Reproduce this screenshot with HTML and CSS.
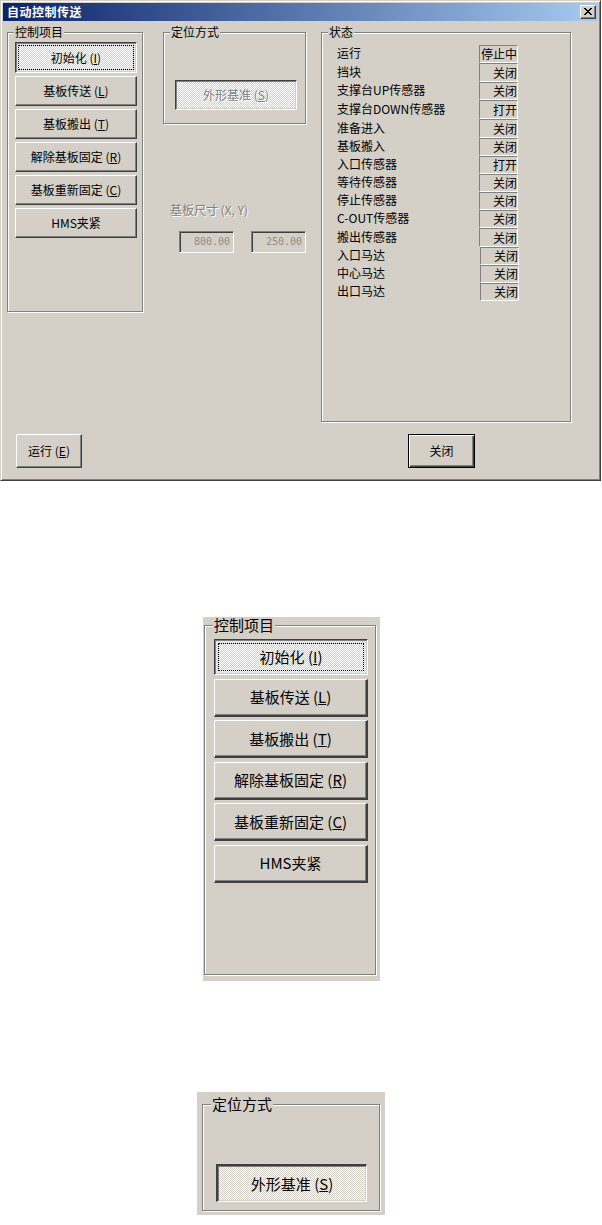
FILE: index.html
```html
<!DOCTYPE html>
<html lang="zh-CN">
<head>
<meta charset="utf-8">
<title>自动控制传送</title>
<link rel="stylesheet" href="styles.css">
</head>
<body>
<div class="window">
  <div class="titlebar">
    <span class="title">自动控制传送</span>
    <div class="close-x">
      <svg width="8" height="7" viewBox="0 0 8 7" shape-rendering="crispEdges"><path fill="#000" d="M0 0h2v1H0zM6 0h2v1H6zM1 1h2v1H1zM5 1h2v1H5zM2 2h4v1H2zM3 3h2v1H3zM2 4h4v1H2zM1 5h2v1H1zM5 5h2v1H5zM0 6h2v1H0zM6 6h2v1H6z"/></svg>
    </div>
  </div>
  <div class="client">
    <div class="top">
      <div class="group g-ctrl">
        <span class="legend">控制项目</span>
        <div class="btn pushed focus ctrl-btn first">初始化 (<u>I</u>)</div>
        <div class="btn ctrl-btn">基板传送 (<u>L</u>)</div>
        <div class="btn ctrl-btn">基板搬出 (<u>T</u>)</div>
        <div class="btn ctrl-btn">解除基板固定 (<u>R</u>)</div>
        <div class="btn ctrl-btn">基板重新固定 (<u>C</u>)</div>
        <div class="btn ctrl-btn">HMS夹紧</div>
      </div>
      <div class="mid">
        <div class="group g-pos">
          <span class="legend">定位方式</span>
          <div class="btn pushed disabled pos-btn">外形基准 (<u>S</u>)</div>
        </div>
        <div class="size-label">基板尺寸 (X, Y)</div>
        <div class="edits">
          <div class="edit">800.00</div>
          <div class="edit">250.00</div>
        </div>
      </div>
      <div class="group g-status">
        <span class="legend">状态</span>
        <div class="status">
          <div class="row"><span class="lbl">运行</span><span class="val">停止中</span></div>
          <div class="row tall"><span class="lbl">挡块</span><span class="val">关闭</span></div>
          <div class="row"><span class="lbl">支撑台UP传感器</span><span class="val">关闭</span></div>
          <div class="row tall"><span class="lbl">支撑台DOWN传感器</span><span class="val">打开</span></div>
          <div class="row tall"><span class="lbl">准备进入</span><span class="val">关闭</span></div>
          <div class="row"><span class="lbl">基板搬入</span><span class="val">关闭</span></div>
          <div class="row"><span class="lbl">入口传感器</span><span class="val">打开</span></div>
          <div class="row"><span class="lbl">等待传感器</span><span class="val">关闭</span></div>
          <div class="row"><span class="lbl">停止传感器</span><span class="val">关闭</span></div>
          <div class="row"><span class="lbl">C-OUT传感器</span><span class="val">关闭</span></div>
          <div class="row tall"><span class="lbl">搬出传感器</span><span class="val">关闭</span></div>
          <div class="row"><span class="lbl">入口马达</span><span class="val shift">关闭</span></div>
          <div class="row"><span class="lbl">中心马达</span><span class="val shift">关闭</span></div>
          <div class="row"><span class="lbl">出口马达</span><span class="val shift">关闭</span></div>
        </div>
      </div>
    </div>
    <div class="bottom">
      <div class="btn run-btn">运行 (<u>E</u>)</div>
      <div class="btn default close-btn">关闭</div>
    </div>
  </div>
</div>

<div class="zoom-a">
  <div class="group za-group">
    <span class="legend big">控制项目</span>
    <div class="btn pushed focus za-btn first">初始化 (<u>I</u>)</div>
    <div class="btn za-btn">基板传送 (<u>L</u>)</div>
    <div class="btn za-btn">基板搬出 (<u>T</u>)</div>
    <div class="btn za-btn">解除基板固定 (<u>R</u>)</div>
    <div class="btn za-btn">基板重新固定 (<u>C</u>)</div>
    <div class="btn za-btn">HMS夹紧</div>
  </div>
</div>

<div class="zoom-b">
  <div class="group zb-group">
    <span class="legend big">定位方式</span>
    <div class="btn pushed zb-btn">外形基准 (<u>S</u>)</div>
  </div>
</div>
</body>
</html>
```
FILE: styles.css
```css
body {
  margin: 0;
  background: #fff;
  font: 12px/14px "Noto Sans CJK SC", "Noto Sans", sans-serif;
  color: #000;
}

u { text-decoration: underline; text-underline-offset: 1px; }

.window {
  width: 601px;
  height: 481px;
  box-sizing: border-box;
  background: #d4d0c8;
  border: 1px solid;
  border-color: #d4d0c8 #404040 #404040 #d4d0c8;
  box-shadow: inset 1px 1px #fff, inset -1px -1px #808080;
  padding: 2px;
  display: flex;
  flex-direction: column;
}

.titlebar {
  height: 18px;
  flex: none;
  background: linear-gradient(to right, #0a246a, #a6caf0);
  display: flex;
  align-items: center;
  padding: 0 2px 0 4px;
}

.title {
  flex: 1;
  color: #fff;
  font-weight: bold;
  font-size: 12px;
  letter-spacing: 0.5px;
}

.close-x {
  width: 16px;
  height: 14px;
  box-sizing: border-box;
  background: #d4d0c8;
  border: 1px solid;
  border-color: #fff #404040 #404040 #fff;
  box-shadow: inset -1px -1px #808080;
  display: flex;
  align-items: center;
  justify-content: center;
  padding: 0 1px 1px 0;
}

.client {
  flex: 1;
  padding-left: 4px;
  display: flex;
  flex-direction: column;
}

.top {
  display: flex;
  align-items: flex-start;
  margin-top: 11px;
}

.group {
  position: relative;
  box-sizing: border-box;
  border: 1px solid #808080;
  box-shadow: inset 1px 1px #fff, 1px 1px #fff;
}

.legend {
  position: absolute;
  top: -8px;
  left: 6px;
  padding: 0 1px;
  background: #d4d0c8;
  line-height: 14px;
  white-space: nowrap;
}

.btn {
  box-sizing: border-box;
  display: flex;
  align-items: center;
  justify-content: center;
  background: #d4d0c8;
  border: 1px solid;
  border-color: #fff #404040 #404040 #fff;
  box-shadow: inset -1px -1px #808080;
  white-space: nowrap;
  flex: none;
}

.btn.pushed {
  border-color: #404040 #fff #fff #404040;
  box-shadow: inset 1px 1px #808080, inset -1px -1px #d4d0c8;
  background: repeating-conic-gradient(#fff 0 25%, #d4d0c8 0 50%) 0 0 / 2px 2px;
}

.btn.focus {
  outline: 1px dotted #000;
  outline-offset: -4px;
}

.btn.disabled {
  color: #808080;
  text-shadow: 1px 1px 0 #fff;
}

.btn.default {
  border: 1px solid #000;
  box-shadow: inset 1px 1px #fff, inset -1px -1px #404040, inset -2px -2px #808080;
}

.g-ctrl {
  width: 136px;
  height: 280px;
  padding: 9px 0 0 7px;
  display: flex;
  flex-direction: column;
  gap: 3px;
}

.ctrl-btn {
  width: 122px;
  height: 30px;
}

.ctrl-btn.first { height: 31px; }

.mid {
  margin-left: 20px;
  display: flex;
  flex-direction: column;
}

.g-pos {
  width: 143px;
  height: 92px;
  padding: 47px 0 0 11px;
}

.pos-btn {
  width: 122px;
  height: 30px;
}

.size-label {
  margin: 79px 0 0 7px;
  color: #808080;
  text-shadow: 1px 1px 0 #fff;
  white-space: nowrap;
}

.edits {
  display: flex;
  gap: 17px;
  margin: 14px 0 0 16px;
}

.edit {
  width: 55px;
  height: 22px;
  box-sizing: border-box;
  border: 1px solid;
  border-color: #808080 #fff #fff #808080;
  box-shadow: inset 1px 1px #404040, inset -1px -1px #d4d0c8;
  font: 10px/20px "DejaVu Sans Mono", "Liberation Mono", monospace;
  color: #8c8c8c;
  text-align: right;
  padding-right: 3px;
}

.g-status {
  width: 250px;
  height: 390px;
  margin-left: 15px;
  padding: 12px 0 0 15px;
}

.status {
  display: flex;
  flex-direction: column;
}

.row {
  display: flex;
  align-items: center;
  height: 18px;
}

.row.tall { height: 19px; }

.lbl {
  width: 142px;
  white-space: nowrap;
  margin-top: -2px;
}

.val {
  width: 39px;
  height: 100%;
  box-sizing: border-box;
  border: 1px solid;
  border-color: #808080 #fff #fff #808080;
  line-height: 16px;
  white-space: nowrap;
  display: flex;
  align-items: center;
  justify-content: flex-end;
}

.val.shift { margin-left: 1px; }

.bottom {
  display: flex;
  margin-top: 12px;
}

.run-btn {
  width: 66px;
  height: 34px;
  margin-left: 9px;
}

.close-btn {
  width: 67px;
  height: 34px;
  margin-left: auto;
  margin-right: 123px;
}

/* enlarged crops */
.zoom-a {
  margin: 136px 0 0 203px;
  width: 177px;
  height: 364px;
  box-sizing: border-box;
  background: #d4d0c8;
  padding: 8px 0 0 1px;
  font-size: 15px;
  line-height: 18px;
}

.legend.big {
  top: -9px;
  left: 8px;
  line-height: 16px;
  font-size: 15px;
}

.za-group {
  width: 172px;
  height: 350px;
  padding: 13px 0 0 9px;
  display: flex;
  flex-direction: column;
  gap: 3.6px;
}

.za-btn {
  width: 154px;
  height: 38px;
  border-right-width: 2px;
  border-bottom-width: 2px;
}

.za-btn.first {
  height: 36px;
  border-right-width: 1px;
  border-bottom-width: 1px;
  outline-offset: -5px;
}

.zoom-b {
  margin: 111px 0 0 197px;
  width: 188px;
  height: 123px;
  box-sizing: border-box;
  background: #d4d0c8;
  padding: 12px 0 0 5px;
  font-size: 15px;
  line-height: 18px;
}

.zb-group {
  width: 178px;
  height: 107px;
  padding: 59px 0 0 13px;
}

.zb-btn {
  width: 151px;
  height: 38px;
  border-width: 2px 1px 1px 2px;
}
```
